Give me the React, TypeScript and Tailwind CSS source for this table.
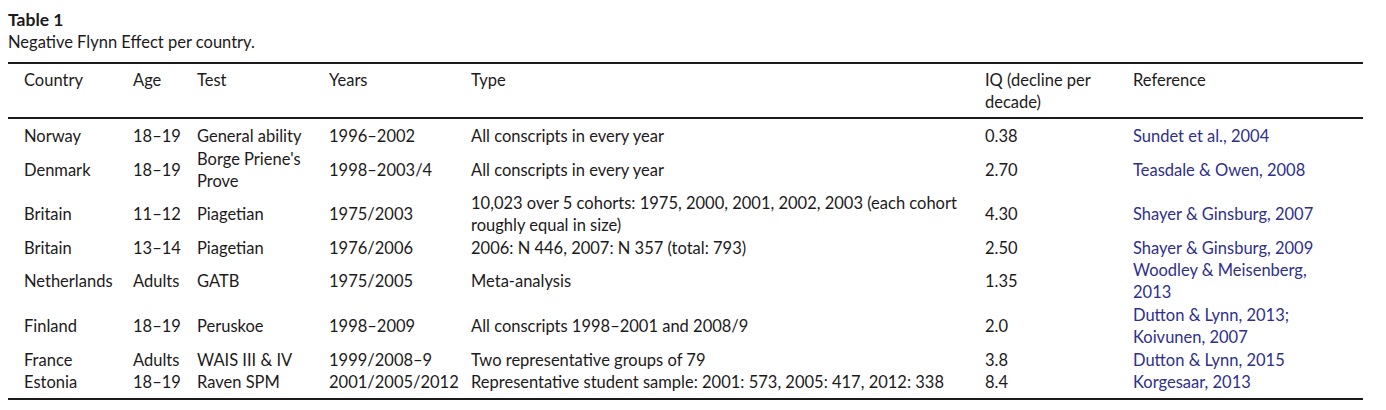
import { Fragment, type ReactNode } from 'react';

type Row = {
  country: string;
  age: string;
  test: ReactNode;
  years: string;
  type: ReactNode;
  iq: string;
  reference: ReactNode;
  pad: string; // per-row vertical spacing, the source table is not uniform
};

const ROWS: Row[] = [
  {
    country: 'Norway',
    age: '18–19',
    test: 'General ability',
    years: '1996–2002',
    type: 'All conscripts in every year',
    iq: '0.38',
    reference: 'Sundet et al., 2004',
    pad: 'pt-[6px]',
  },
  {
    country: 'Denmark',
    age: '18–19',
    test: <>Borge Priene's<br />Prove</>,
    years: '1998–2003/4',
    type: 'All conscripts in every year',
    iq: '2.70',
    reference: 'Teasdale & Owen, 2008',
    pad: 'pt-px',
  },
  {
    country: 'Britain',
    age: '11–12',
    test: 'Piagetian',
    years: '1975/2003',
    type: <>10,023 over 5 cohorts: 1975, 2000, 2001, 2002, 2003 (each cohort<br />roughly equal in size)</>,
    iq: '4.30',
    reference: 'Shayer & Ginsburg, 2007',
    pad: '',
  },
  {
    country: 'Britain',
    age: '13–14',
    test: 'Piagetian',
    years: '1976/2006',
    type: '2006: N 446, 2007: N 357 (total: 793)',
    iq: '2.50',
    reference: 'Shayer & Ginsburg, 2009',
    pad: 'pt-px',
  },
  {
    country: 'Netherlands',
    age: 'Adults',
    test: 'GATB',
    years: '1975/2005',
    type: 'Meta-analysis',
    iq: '1.35',
    reference: <>Woodley & Meisenberg,<br />2013</>,
    pad: '',
  },
  {
    country: 'Finland',
    age: '18–19',
    test: 'Peruskoe',
    years: '1998–2009',
    type: 'All conscripts 1998–2001 and 2008/9',
    iq: '2.0',
    reference: <>Dutton & Lynn, 2013;<br />Koivunen, 2007</>,
    pad: 'pt-px',
  },
  {
    country: 'France',
    age: 'Adults',
    test: 'WAIS III & IV',
    years: '1999/2008–9',
    type: 'Two representative groups of 79',
    iq: '3.8',
    reference: 'Dutton & Lynn, 2015',
    pad: 'pt-px',
  },
  {
    country: 'Estonia',
    age: '18–19',
    test: 'Raven SPM',
    years: '2001/2005/2012',
    type: 'Representative student sample: 2001: 573, 2005: 417, 2012: 338',
    iq: '8.4',
    reference: 'Korgesaar, 2013',
    pad: 'pb-[5px]',
  },
];

const COLS = 'grid grid-cols-[109px_64px_132px_142px_514px_148px_1fr] pl-4 items-center';

export default function App() {
  return (
    <div className="min-h-[410px] bg-white pl-2 pt-[9px] font-['Lato',sans-serif] text-[16.5px] leading-[22px] text-[#1c1a1b]">
      <div className="text-[17.5px] font-bold">Table 1</div>
      <div>Negative Flynn Effect per country.</div>

      <div className="mt-[9px] w-[1355px]">
        <div className={`${COLS} border-y-2 border-[#1c1a1b] pt-[5px] pb-[4px] items-start`}>
          <div>Country</div>
          <div>Age</div>
          <div>Test</div>
          <div>Years</div>
          <div>Type</div>
          <div>IQ (decline per<br />decade)</div>
          <div>Reference</div>
        </div>

        <div className="border-b-2 border-[#1c1a1b]">
          {ROWS.map((row, idx) => (
            <Fragment key={idx}>
              <div className={`${COLS} ${row.pad}`}>
                <div>{row.country}</div>
                <div>{row.age}</div>
                <div>{row.test}</div>
                <div>{row.years}</div>
                <div>{row.type}</div>
                <div>{row.iq}</div>
                <div className="text-[#2f2f8c]">{row.reference}</div>
              </div>
            </Fragment>
          ))}
        </div>
      </div>
    </div>
  );
}
